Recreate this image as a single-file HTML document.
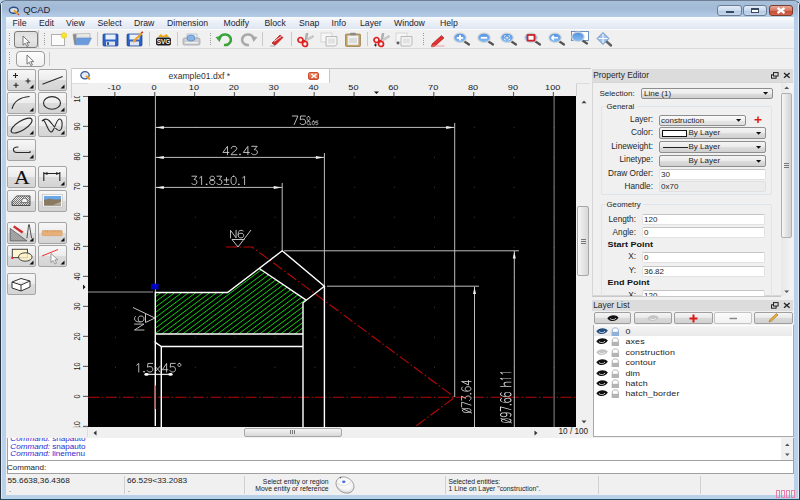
<!DOCTYPE html><html><head><meta charset="utf-8"><style>
*{margin:0;padding:0;box-sizing:border-box}
html,body{width:800px;height:500px;overflow:hidden;background:#b9d1ea;font-family:"Liberation Sans",sans-serif;color:#1e1e1e}
.a{position:absolute}
.t{position:absolute;white-space:nowrap;line-height:1}
svg{position:absolute;overflow:visible}
.btn{position:absolute;border:1px solid #9a9a9a;border-radius:3px;background:linear-gradient(#f6f6f6,#e9e9e9 45%,#d9d9d9 50%,#d2d2d2)}
.tbtn{position:absolute;border:1px solid #a5a5a5;border-radius:2px;background:linear-gradient(#f7f7f7,#ececec 50%,#dcdcdc 51%,#d4d4d4)}
.inp{position:absolute;background:#fff;border:1px solid #e2e2e2;border-top-color:#c4c4c4;border-radius:2px}
.cmb{position:absolute;border:1px solid #8e8e8e;border-radius:2px;background:linear-gradient(#f4f4f4,#ebebeb 50%,#dddddd 51%,#d0d0d0)}
</style></head><body>
<div class="a" style="left:0px;top:0px;width:800px;height:500px;background:linear-gradient(#a9bfd9,#a2bad6 8px,#b6cde8 16px,#bad1ea 40px,#bad1ea 100%);border:1px solid #2a3440;border-top-color:#6d7f94;border-bottom:1px solid #1d5060;border-radius:6px 6px 0 0"></div>
<div class="a" style="left:6px;top:17px;width:788px;height:478px;background:#f0f0f0"></div>
<div class="a" style="left:1px;top:3px;width:1px;height:495px;background:#dceaf8"></div>
<div class="a" style="left:798px;top:3px;width:1px;height:495px;background:#dceaf8"></div>
<svg style="left:8px;top:5px" width="14" height="12" viewBox="0 0 14 12">
<ellipse cx="5.8" cy="5.3" rx="4.4" ry="3.0" fill="#d8dde6" stroke="#2a4a8a" stroke-width="1.4"/>
<path d="M6 5.5 L10 9" stroke="#e8a020" stroke-width="1.8"/><path d="M10 9 L11 9.8" stroke="#d04040" stroke-width="1.5"/></svg>
<div class="t" style="left:23.3px;top:5.6px;font-size:9.4px;color:#1d2333;transform:scaleY(0.88);transform-origin:0 0">QCAD</div>
<div class="a" style="left:717px;top:5px;width:25px;height:11px;border:1px solid #6a7d95;border-radius:3px;background:linear-gradient(#e4edf8,#c9d9ee 50%,#b3c8e3 51%,#c5d7ee)"></div>
<div class="a" style="left:743px;top:5px;width:24px;height:11px;border:1px solid #6a7d95;border-radius:3px;background:linear-gradient(#e4edf8,#c9d9ee 50%,#b3c8e3 51%,#c5d7ee)"></div>
<div class="a" style="left:769px;top:5px;width:24px;height:11px;border:1px solid #7a3d30;border-radius:3px;background:linear-gradient(#e9a99a,#d67560 50%,#c24a32 51%,#d5664c)"></div>
<div class="a" style="left:726px;top:11px;width:8px;height:2px;background:#fff;border:1px solid #3a4a5e"></div>
<div class="a" style="left:751px;top:8px;width:8px;height:5px;border:1px solid #3a4a5e;border-top-width:2px;background:#fff"></div>
<svg style="left:776px;top:7px" width="10" height="7"><path d="M1.5 1 L8.5 6 M8.5 1 L1.5 6" stroke="#fff" stroke-width="2.2"/></svg>
<div class="a" style="left:6px;top:17px;width:788px;height:12px;background:linear-gradient(#fafbfd,#eaeff7 50%,#dfe7f2)"></div>
<div class="t" style="left:12.5px;top:19.0px;font-size:8.7px;color:#1c1c30;">File</div>
<div class="t" style="left:39px;top:19.0px;font-size:8.7px;color:#1c1c30;">Edit</div>
<div class="t" style="left:66px;top:19.0px;font-size:8.7px;color:#1c1c30;">View</div>
<div class="t" style="left:97.5px;top:19.0px;font-size:8.7px;color:#1c1c30;">Select</div>
<div class="t" style="left:134px;top:19.0px;font-size:8.7px;color:#1c1c30;">Draw</div>
<div class="t" style="left:167px;top:19.0px;font-size:8.7px;color:#1c1c30;">Dimension</div>
<div class="t" style="left:223.5px;top:19.0px;font-size:8.7px;color:#1c1c30;">Modify</div>
<div class="t" style="left:264.5px;top:19.0px;font-size:8.7px;color:#1c1c30;">Block</div>
<div class="t" style="left:299px;top:19.0px;font-size:8.7px;color:#1c1c30;">Snap</div>
<div class="t" style="left:331.5px;top:19.0px;font-size:8.7px;color:#1c1c30;">Info</div>
<div class="t" style="left:360px;top:19.0px;font-size:8.7px;color:#1c1c30;">Layer</div>
<div class="t" style="left:394px;top:19.0px;font-size:8.7px;color:#1c1c30;">Window</div>
<div class="t" style="left:440px;top:19.0px;font-size:8.7px;color:#1c1c30;">Help</div>
<div class="a" style="left:6px;top:29px;width:788px;height:20px;background:#f0f0f0;border-top:1px solid #fcfcfd;border-bottom:1px solid #dadada"></div>
<div class="a" style="left:9px;top:33px;width:1px;height:13px;background:repeating-linear-gradient(#9a9a9a 0 0.8px,transparent 0.8px 1.8px)"></div>
<div class="a" style="left:14px;top:31px;width:24px;height:17px;border:1px solid #7c7c7c;border-radius:3px;background:linear-gradient(#dedede,#e6e6e6 50%,#d8d8d8)"></div>
<div class="a" style="left:38px;top:29.5px;width:1px;height:19px;background:#c9c9c9"></div>
<svg style="left:21.5px;top:34.5px" width="10" height="13"><path d="M1 1 L1 10.2 L3.2 8.2 L4.9 11.6 L6.4 10.9 L4.8 7.6 L7.8 7.6 Z" fill="#fff" stroke="#6a6a6a" stroke-width="0.9" stroke-linejoin="round"/></svg>
<div class="a" style="left:44px;top:33px;width:1px;height:13px;background:repeating-linear-gradient(#9a9a9a 0 0.8px,transparent 0.8px 1.8px)"></div>
<svg style="left:50px;top:32px" width="18" height="15"><rect x="1.5" y="2.5" width="13" height="11" fill="#fbfbfb" stroke="#b0b0b0"/><circle cx="14" cy="3.5" r="2.8" fill="#f3e43a" stroke="#e6c200" stroke-width=".5"/></svg>
<svg style="left:72px;top:33px" width="21" height="13"><defs><linearGradient id="og" x1="0" y1="0" x2="0" y2="1"><stop offset="0" stop-color="#f4f4f4"/><stop offset="1" stop-color="#b8b8b8"/></linearGradient></defs><path d="M1 1 L18 0.5 L18 6 L3.5 11.5 L2.5 11.5Z" fill="url(#og)" stroke="#9a9a9a" stroke-width=".6"/><path d="M1 1.5 L4.5 1 L4 11 L2.5 11.5Z" fill="#8a8a8a"/><path d="M5 5 L19.5 5 L16.2 11.8 L3 11.8Z" fill="#6b9bda" stroke="#5a88c8" stroke-width=".5"/></svg>
<div class="a" style="left:97px;top:32px;width:1px;height:14px;background:#c9c9c9"></div>
<svg style="left:102px;top:33px" width="17" height="14"><rect x="1" y="1" width="15" height="12" rx="1" fill="#2d62c8" stroke="#1b3f90" stroke-width=".7"/><rect x="3.5" y="1.5" width="10" height="5" fill="#e8f0fb"/><rect x="4" y="8.5" width="9" height="4" fill="#dfe6f2"/><rect x="5" y="9.3" width="2" height="2.5" fill="#2d4f90"/></svg>
<svg style="left:126px;top:32px" width="18" height="15"><rect x="1" y="2" width="15" height="12" rx="1" fill="#2d62c8" stroke="#1b3f90" stroke-width=".7"/><rect x="3.5" y="2.5" width="10" height="5" fill="#e8f0fb"/><rect x="4" y="9.5" width="9" height="4" fill="#dfe6f2"/><path d="M7 10 L15.5 1.5" stroke="#f0a020" stroke-width="2.2"/><path d="M15 1 L17 0" stroke="#d04020" stroke-width="1.5"/></svg>
<div class="a" style="left:149px;top:32px;width:1px;height:14px;background:#c9c9c9"></div>
<svg style="left:155px;top:33px" width="17" height="13"><path d="M3 4 L5.5 1 L8.5 3 L11.5 1 L14 4Z" fill="#e8a818"/><rect x="1" y="4.5" width="15" height="8" rx="2" fill="#1a1a1a"/><text x="8.5" y="11" font-size="6.5" font-family="Liberation Sans" font-weight="bold" fill="#f0f0f0" text-anchor="middle">SVG</text></svg>
<div class="a" style="left:177px;top:32px;width:1px;height:14px;background:#c9c9c9"></div>
<svg style="left:182px;top:33px" width="19" height="13"><rect x="5" y="1" width="10" height="5" fill="#e8eef6" stroke="#9aa8b8" stroke-width=".6"/><rect x="1" y="5" width="17" height="7" rx="1.5" fill="#c9ccd1" stroke="#8d9299" stroke-width=".6"/><ellipse cx="9" cy="5" rx="4" ry="3" fill="#8ab4e4" stroke="#4a7ab4" stroke-width=".6"/><rect x="3" y="9" width="13" height="1.5" fill="#eee"/></svg>
<div class="a" style="left:210px;top:33px;width:1px;height:13px;background:repeating-linear-gradient(#9a9a9a 0 0.8px,transparent 0.8px 1.8px)"></div>
<svg style="left:215px;top:33px" width="18" height="14"><path d="M4 6 A6 5.3 0 1 1 9 12" fill="none" stroke="#3aa33a" stroke-width="2.6"/><path d="M0.5 4 L7 3 L4.5 9Z" fill="#3aa33a"/></svg>
<svg style="left:240px;top:33px" width="18" height="14"><path d="M14 6 A6 5.3 0 1 0 9 12" fill="none" stroke="#a9a9a9" stroke-width="2.6"/><path d="M17.5 4 L11 3 L13.5 9Z" fill="#a9a9a9"/></svg>
<div class="a" style="left:262px;top:32px;width:1px;height:14px;background:#c9c9c9"></div>
<svg style="left:269px;top:33px" width="16" height="14"><path d="M3 10 L11 2 L14 4.5 L6 12.5Z" fill="#d82828" stroke="#a01818" stroke-width=".6"/><path d="M5 8.5 L12.5 3.3" stroke="#fff" stroke-width=".9"/><path d="M1 13 L6 13" stroke="#b0b0b0" stroke-width="1"/></svg>
<div class="a" style="left:291px;top:32px;width:1px;height:14px;background:#c9c9c9"></div>
<svg style="left:296px;top:33px" width="18" height="14"><path d="M9 8 L10 0.5 L12 0.5 L10.5 7" fill="#b8b8b8" stroke="#8a8a8a" stroke-width=".5"/><path d="M9 7 L17 2.5 L17.5 4 L10.5 8" fill="#d8d8d8" stroke="#9a9a9a" stroke-width=".5"/><circle cx="4.5" cy="7" r="2.5" fill="none" stroke="#e02020" stroke-width="1.7"/><circle cx="9" cy="11" r="2.5" fill="none" stroke="#e02020" stroke-width="1.7"/><path d="M6.5 8 L9.5 7.5" stroke="#e02020" stroke-width="1.5"/></svg>
<svg style="left:320px;top:32px" width="19" height="15"><rect x="1" y="1" width="11" height="9" fill="#f6f6f6" stroke="#cfcfcf" stroke-width=".8"/><path d="M6 4.5 L17 4.5 L17 12.5 L15 14 L6 14Z" fill="#f4f4f4" stroke="#aaa" stroke-width=".8"/><rect x="8" y="6.5" width="7" height="5" fill="#e2e2e2"/></svg>
<svg style="left:344px;top:32px" width="18" height="15"><rect x="1.5" y="2" width="15" height="12.5" rx="1" fill="#c0a060" stroke="#9a7a40" stroke-width=".7"/><rect x="3.5" y="3.5" width="11" height="9.5" fill="#f0f0f0" stroke="#bbb" stroke-width=".4"/><rect x="6" y="0.8" width="6" height="2.5" rx="1" fill="#8a8a8a"/><rect x="5" y="6" width="8" height="5" fill="#dcdcdc"/></svg>
<div class="a" style="left:367px;top:32px;width:1px;height:14px;background:#c9c9c9"></div>
<svg style="left:372px;top:33px" width="18" height="14"><path d="M9 8 L10 0.5 L12 0.5 L10.5 7" fill="#b8b8b8" stroke="#8a8a8a" stroke-width=".5"/><path d="M9 7 L17 2.5 L17.5 4 L10.5 8" fill="#d8d8d8" stroke="#9a9a9a" stroke-width=".5"/><circle cx="4.5" cy="7" r="2.5" fill="none" stroke="#e02020" stroke-width="1.7"/><circle cx="9" cy="11" r="2.5" fill="none" stroke="#e02020" stroke-width="1.7"/><path d="M6.5 8 L9.5 7.5" stroke="#e02020" stroke-width="1.5"/><path d="M2 12 L5 12 M3.5 10.5 L3.5 13.5" stroke="#222" stroke-width=".9"/></svg>
<svg style="left:395px;top:32px" width="19" height="15"><rect x="1" y="1" width="11" height="9" fill="#f6f6f6" stroke="#cfcfcf" stroke-width=".8"/><path d="M6 4.5 L17 4.5 L17 12.5 L15 14 L6 14Z" fill="#f4f4f4" stroke="#aaa" stroke-width=".8"/><rect x="8" y="6.5" width="7" height="5" fill="#e2e2e2"/><path d="M1.5 11 L4.5 11 M3 9.5 L3 12.5" stroke="#222" stroke-width=".9"/></svg>
<div class="a" style="left:423px;top:33px;width:1px;height:13px;background:repeating-linear-gradient(#9a9a9a 0 0.8px,transparent 0.8px 1.8px)"></div>
<svg style="left:430px;top:33px" width="16" height="14"><path d="M2 11 L11.5 2.5 L14 5 L4.5 13.5 L1.5 13.8Z" fill="#e03030" stroke="#a02020" stroke-width=".6"/><path d="M2 13 L14.5 13" stroke="#e88" stroke-width=".8"/></svg>
<svg style="left:453px;top:32px" width="19" height="15"><defs><linearGradient id="lg453" x1="0" y1="0" x2="0" y2="1"><stop offset="0" stop-color="#4f8ee0"/><stop offset="1" stop-color="#8cc0f2"/></linearGradient></defs><path d="M11.5 9.5 L16 12.5" stroke="#555" stroke-width="2.2" stroke-linecap="round"/><ellipse cx="7" cy="5.8" rx="6.2" ry="4.7" fill="url(#lg453)" stroke="#d0d4d8" stroke-width="1.1"/><path d="M3.8 5.8 L10.2 5.8 M7 3 L7 8.6" stroke="#fff" stroke-width="1.8"/></svg>
<svg style="left:477px;top:32px" width="19" height="15"><defs><linearGradient id="lg477" x1="0" y1="0" x2="0" y2="1"><stop offset="0" stop-color="#4f8ee0"/><stop offset="1" stop-color="#8cc0f2"/></linearGradient></defs><path d="M11.5 9.5 L16 12.5" stroke="#555" stroke-width="2.2" stroke-linecap="round"/><ellipse cx="7" cy="5.8" rx="6.2" ry="4.7" fill="url(#lg477)" stroke="#d0d4d8" stroke-width="1.1"/><path d="M3.8 5.8 L10.2 5.8" stroke="#fff" stroke-width="1.8"/></svg>
<svg style="left:500px;top:32px" width="19" height="15"><defs><linearGradient id="lg500" x1="0" y1="0" x2="0" y2="1"><stop offset="0" stop-color="#4f8ee0"/><stop offset="1" stop-color="#8cc0f2"/></linearGradient></defs><path d="M11.5 9.5 L16 12.5" stroke="#555" stroke-width="2.2" stroke-linecap="round"/><ellipse cx="7" cy="5.8" rx="6.2" ry="4.7" fill="url(#lg500)" stroke="#d0d4d8" stroke-width="1.1"/><path d="M4 4.5 L5.5 3.5 M10 4.5 L8.5 3.5 M4 7 L5.5 8 M10 7 L8.5 8" stroke="#fff" stroke-width="1"/><ellipse cx="7" cy="5.8" rx="1.5" ry="1" fill="#dde"/></svg>
<svg style="left:524px;top:32px" width="19" height="15"><defs><linearGradient id="lg524" x1="0" y1="0" x2="0" y2="1"><stop offset="0" stop-color="#4f8ee0"/><stop offset="1" stop-color="#8cc0f2"/></linearGradient></defs><path d="M11.5 9.5 L16 12.5" stroke="#555" stroke-width="2.2" stroke-linecap="round"/><ellipse cx="7" cy="5.8" rx="6.2" ry="4.7" fill="url(#lg524)" stroke="#d0d4d8" stroke-width="1.1"/><rect x="3.6" y="3" width="6.8" height="5.6" fill="#fff" stroke="#d02020" stroke-width="1.7"/></svg>
<svg style="left:548px;top:32px" width="19" height="15"><defs><linearGradient id="lg548" x1="0" y1="0" x2="0" y2="1"><stop offset="0" stop-color="#4f8ee0"/><stop offset="1" stop-color="#8cc0f2"/></linearGradient></defs><path d="M11.5 9.5 L16 12.5" stroke="#555" stroke-width="2.2" stroke-linecap="round"/><ellipse cx="7" cy="5.8" rx="6.2" ry="4.7" fill="url(#lg548)" stroke="#d0d4d8" stroke-width="1.1"/><path d="M3.5 5.8 L10 5.8 M3.5 5.8 L5.8 3.6 M3.5 5.8 L5.8 8" stroke="#fff" stroke-width="1.5"/></svg>
<svg style="left:571px;top:31px" width="19" height="15"><rect x="0.5" y="0.5" width="17" height="9" fill="#fff" stroke="#4a78b8" stroke-width=".8"/><defs><linearGradient id="lg571" x1="0" y1="0" x2="0" y2="1"><stop offset="0" stop-color="#4f8ee0"/><stop offset="1" stop-color="#8cc0f2"/></linearGradient></defs><path d="M11.5 9.5 L16 12.5" stroke="#555" stroke-width="2.2" stroke-linecap="round"/><ellipse cx="7" cy="5.8" rx="6.2" ry="4.7" fill="url(#lg571)" stroke="#d0d4d8" stroke-width="1.1"/></svg>
<svg style="left:596px;top:32px" width="19" height="15"><path d="M10 9 L15 13.5" stroke="#606060" stroke-width="2.4" stroke-linecap="round"/><path d="M7 0.5 L13 6.5 L7 12.5 L1 6.5Z" fill="#9cc0ea" stroke="#5d85b6" stroke-width=".8"/><path d="M7 2 L7 11 M2.5 6.5 L11.5 6.5" stroke="#fff" stroke-width="1"/></svg>
<div class="a" style="left:6px;top:49px;width:788px;height:18px;background:#f0f0f0"></div>
<div class="a" style="left:9px;top:52px;width:1px;height:13px;background:repeating-linear-gradient(#9a9a9a 0 0.8px,transparent 0.8px 1.8px)"></div>
<div class="a" style="left:16px;top:51px;width:29px;height:16px;border:1px solid #9c9c9c;border-radius:4px;background:linear-gradient(#fdfdfd,#f0f0f0)"></div>
<svg style="left:25.5px;top:53.5px" width="10" height="13"><path d="M1 1 L1 10.2 L3.2 8.2 L4.9 11.6 L6.4 10.9 L4.8 7.6 L7.8 7.6 Z" fill="#fff" stroke="#6a6a6a" stroke-width="0.9" stroke-linejoin="round"/></svg>
<div class="a" style="left:48.5px;top:52px;width:1px;height:14px;background:#c9c9c9"></div>
<div class="a" style="left:6px;top:67px;width:66px;height:370px;background:#f0f0f0"></div>
<div class="tbtn" style="left:7px;top:68.5px;width:29px;height:22px"></div>
<svg style="left:7px;top:68.5px" width="29" height="22"><path d="M8.5 4 L8.5 9 M6 6.5 L11 6.5 M21 9.5 L21 14.5 M18.5 12 L23.5 12 M9 13.8 L9 18.8 M6.5 16.3 L11.5 16.3" stroke="#222" stroke-width="1.1" fill="none"/><path d="M22.5 19.5 L26.5 19.5 L26.5 15.5Z" fill="#111"/></svg>
<div class="tbtn" style="left:38px;top:68.5px;width:29px;height:22px"></div>
<svg style="left:38px;top:68.5px" width="29" height="22"><path d="M4.4 15.2 L24.7 7.5" stroke="#2a2a2a" fill="none" stroke-width="1.1"/><path d="M22.5 19.5 L26.5 19.5 L26.5 15.5Z" fill="#111"/></svg>
<div class="tbtn" style="left:7px;top:92px;width:29px;height:22px"></div>
<svg style="left:7px;top:92px" width="29" height="22"><path d="M5 16.8 Q8 5.5 22.6 4.5" stroke="#2a2a2a" fill="none" stroke-width="1.1"/><path d="M22.5 19.5 L26.5 19.5 L26.5 15.5Z" fill="#111"/></svg>
<div class="tbtn" style="left:38px;top:92px;width:29px;height:22px"></div>
<svg style="left:38px;top:92px" width="29" height="22"><ellipse cx="14" cy="10.9" rx="8.5" ry="6.3" stroke="#2a2a2a" fill="none" stroke-width="1.1"/><path d="M22.5 19.5 L26.5 19.5 L26.5 15.5Z" fill="#111"/></svg>
<div class="tbtn" style="left:7px;top:115px;width:29px;height:22px"></div>
<svg style="left:7px;top:115px" width="29" height="22"><ellipse cx="14.6" cy="10.6" rx="12" ry="4.6" transform="rotate(-32 14.6 10.6)" stroke="#2a2a2a" fill="none" stroke-width="1.1"/><path d="M22.5 19.5 L26.5 19.5 L26.5 15.5Z" fill="#111"/></svg>
<div class="tbtn" style="left:38px;top:115px;width:29px;height:22px"></div>
<svg style="left:38px;top:115px" width="29" height="22"><path d="M4 6 C7 2 9 15 12.5 16.8 C16 18.5 18 4 21.5 4 C25.5 4 24.5 15 21.5 15.5 C18 16 14 8 11 5.5 C8 3 5.5 4.5 4 6Z" stroke="#2a2a2a" fill="none" stroke-width="1.1"/><path d="M22.5 19.5 L26.5 19.5 L26.5 15.5Z" fill="#111"/></svg>
<div class="tbtn" style="left:7px;top:138.5px;width:29px;height:22px"></div>
<svg style="left:7px;top:138.5px" width="29" height="22"><path d="M11.3 8.1 C7.5 7.8 6.2 9.5 6.4 10.8 C6.6 12.5 8 13.5 9.7 13.5 L23 13.5 L23 12" stroke="#2a2a2a" fill="none" stroke-width="1.1"/><path d="M22.5 19.5 L26.5 19.5 L26.5 15.5Z" fill="#111"/></svg>
<div class="tbtn" style="left:7px;top:166px;width:29px;height:22px"></div>
<svg style="left:7px;top:166px" width="29" height="22"><text x="14.8" y="17.8" font-family="Liberation Serif" font-size="19" text-anchor="middle" fill="#111" transform="translate(14.8 0) scale(1.15 1) translate(-14.8 0)">A</text></svg>
<div class="tbtn" style="left:38px;top:166px;width:29px;height:22px"></div>
<svg style="left:38px;top:166px" width="29" height="22"><path d="M5.8 6 L5.8 15 M21.8 6 L21.8 15 M5.8 7.5 L21.8 7.5" stroke="#222" stroke-width="1.1" fill="none"/><path d="M5.8 7.5 L9.5 6 L9.5 9Z M21.8 7.5 L18.1 6 L18.1 9Z" fill="#222"/><path d="M22.5 19.5 L26.5 19.5 L26.5 15.5Z" fill="#111"/></svg>
<div class="tbtn" style="left:7px;top:189.5px;width:29px;height:22px"></div>
<svg style="left:7px;top:189.5px" width="29" height="22"><defs><pattern id="hp" width="2" height="2" patternUnits="userSpaceOnUse"><path d="M0 2 L2 0" stroke="#444" stroke-width=".7"/></pattern></defs><path d="M5 15.5 L5 11.2 L9.7 5.9 L23 5.9 L23 15.5Z" fill="url(#hp)" stroke="#333" stroke-width=".8"/><path d="M14.5 12.5 C14.5 9.5 15.5 8.3 17.5 8.3 C19.5 8.3 20.5 9.5 20.5 12.5Z" fill="#f4f4f4" stroke="#444" stroke-width=".6"/></svg>
<div class="tbtn" style="left:38px;top:189.5px;width:29px;height:22px"></div>
<svg style="left:38px;top:189.5px" width="29" height="22"><rect x="4.5" y="4.5" width="20" height="12.5" fill="#f8f8f8" stroke="#bbb" stroke-width=".6"/><rect x="6" y="6" width="17" height="9.5" fill="#7a7a70"/><rect x="6" y="6" width="17" height="3.5" fill="#6aa8e8"/><path d="M6 11 L11 8.5 L17 10 L23 9.5 L23 15.5 L6 15.5Z" fill="#8a7a62"/><path d="M14 15.5 L23 11.5 L23 15.5Z" fill="#b0a898"/></svg>
<div class="tbtn" style="left:7px;top:221.5px;width:29px;height:22px"></div>
<svg style="left:7px;top:221.5px" width="29" height="22"><defs><pattern id="hp2" width="1.6" height="1.6" patternUnits="userSpaceOnUse"><path d="M0 1.6 L1.6 0" stroke="#666" stroke-width=".5"/></pattern></defs><path d="M3.2 6.4 L3.2 18.9 L19.9 18.9Z" fill="#bdbdbd" stroke="#555" stroke-width=".8"/><path d="M3.2 6.4 L3.2 18.9 L19.9 18.9Z" fill="url(#hp2)"/><path d="M7.4 3.8 L16.2 9.8 L15 11.2 L6.4 5.3Z" fill="#e02828" stroke="#a01818" stroke-width=".5"/><path d="M16.2 9.8 L17.3 10.6 L15 11.2Z" fill="#e8c090"/><path d="M21.6 3.3 L19.9 16.3 M22.4 3.3 L24.6 16.3" stroke="#444" stroke-width=".9" fill="none"/><rect x="21" y="2.5" width="2" height="2" fill="#555"/><path d="M22.5 19.5 L26.5 19.5 L26.5 15.5Z" fill="#111"/></svg>
<div class="tbtn" style="left:38px;top:221.5px;width:29px;height:22px"></div>
<svg style="left:38px;top:221.5px" width="29" height="22"><rect x="4" y="8.5" width="20.3" height="5.2" rx="1" fill="#e8b078" stroke="#d09860" stroke-width=".5"/><path d="M7 8.5 L7 10 M9.5 8.5 L9.5 10.5 M12 8.5 L12 10 M14.5 8.5 L14.5 10.5 M17 8.5 L17 10 M19.5 8.5 L19.5 10.5 M22 8.5 L22 10" stroke="#b88050" stroke-width=".5"/><path d="M22.5 19.5 L26.5 19.5 L26.5 15.5Z" fill="#111"/></svg>
<div class="tbtn" style="left:7px;top:245px;width:29px;height:22px"></div>
<svg style="left:7px;top:245px" width="29" height="22"><rect x="5.3" y="4.25" width="15.1" height="8.4" fill="#fff5d0" stroke="#333" stroke-width=".9"/><ellipse cx="18.3" cy="12" rx="6.8" ry="4.2" fill="#fff2c8" fill-opacity=".8" stroke="#333" stroke-width=".9"/><circle cx="5.3" cy="13" r="1" fill="#e02020"/><path d="M5.3 12.6 L5.3 14" stroke="#e02020" stroke-width="1"/><path d="M22.5 19.5 L26.5 19.5 L26.5 15.5Z" fill="#111"/></svg>
<div class="tbtn" style="left:38px;top:245px;width:29px;height:22px"></div>
<svg style="left:38px;top:245px" width="29" height="22"><path d="M4 11 L20 4.5" stroke="#f03030" stroke-width="1"/><path d="M13 8.5 L13 17.5 L15.2 15.5 L17 19 L18.5 18.2 L16.8 14.8 L19.8 14.8Z" fill="#fff" stroke="#777" stroke-width=".7"/><path d="M22.5 19.5 L26.5 19.5 L26.5 15.5Z" fill="#111"/></svg>
<div class="tbtn" style="left:7px;top:272.5px;width:29px;height:22px"></div>
<svg style="left:7px;top:272.5px" width="29" height="22"><path d="M5 9 L14 5.5 L23 8 L23 14 L14 18 L5 15Z M5 9 L14 12 L23 8 M14 12 L14 18" fill="#fff" stroke="#333" stroke-width="1"/></svg>
<div class="a" style="left:72px;top:67px;width:520px;height:370px;background:#f0f0f0"></div>
<div class="a" style="left:72px;top:68px;width:519px;height:1px;background:#c5c5c5"></div>
<div class="a" style="left:71px;top:68px;width:1px;height:30px;background:#d0d0d0"></div>
<div class="a" style="left:72px;top:69px;width:258px;height:14px;background:#fff;border-right:1px solid #c8c8c8"></div>
<svg style="left:80px;top:71px" width="12" height="10"><ellipse cx="5" cy="4.3" rx="4.2" ry="3.6" fill="#e6ecf8" stroke="#3a5a9a" stroke-width="1.3"/><path d="M6 5 L10 8.5" stroke="#e8a020" stroke-width="1.8"/></svg>
<div class="t" style="left:168.6px;top:72.3px;font-size:8.6px;color:#333;">example01.dxf *</div>
<div class="a" style="left:308px;top:72px;width:11px;height:8px;border-radius:2px;background:linear-gradient(#f09070,#d85a3a);border:1px solid #c85030"></div>
<svg style="left:310px;top:73px" width="8" height="6"><path d="M1.5 1 L6.5 5 M6.5 1 L1.5 5" stroke="#fff" stroke-width="1.5"/></svg>
<div class="a" style="left:72px;top:83px;width:16px;height:13px;background:#f0f0f0;border-top:1px solid #e0e0e0"></div>
<div class="a" style="left:576px;top:83px;width:14px;height:13px;background:#f0f0f0;border-left:1px solid #d0d0d0"></div>
<div class="a" style="left:72px;top:82.5px;width:518px;height:1px;background:#dcdcdc"></div>
<div class="a" style="left:88px;top:83px;width:488px;height:13px;background:#f0f0f0"></div>
<div class="a" style="left:72px;top:96px;width:16px;height:331px;background:#f0f0f0"></div>
<svg style="left:0;top:0" width="800" height="500"><line x1="114.83" y1="92" x2="114.83" y2="96" stroke="#666" stroke-width="1.2"/><text x="0" y="0" transform="translate(114.23 89.8) scale(1 0.8)" font-size="9.2" font-family="Liberation Sans" fill="#1a1a1a" text-anchor="middle">-10</text><line x1="154.70000000000002" y1="92" x2="154.70000000000002" y2="96" stroke="#666" stroke-width="1.2"/><text x="0" y="0" transform="translate(154.10000000000002 89.8) scale(1 0.8)" font-size="9.2" font-family="Liberation Sans" fill="#1a1a1a" text-anchor="middle">0</text><line x1="194.57000000000002" y1="92" x2="194.57000000000002" y2="96" stroke="#666" stroke-width="1.2"/><text x="0" y="0" transform="translate(193.97000000000003 89.8) scale(1 0.8)" font-size="9.2" font-family="Liberation Sans" fill="#1a1a1a" text-anchor="middle">10</text><line x1="234.44000000000003" y1="92" x2="234.44000000000003" y2="96" stroke="#666" stroke-width="1.2"/><text x="0" y="0" transform="translate(233.84000000000003 89.8) scale(1 0.8)" font-size="9.2" font-family="Liberation Sans" fill="#1a1a1a" text-anchor="middle">20</text><line x1="274.31" y1="92" x2="274.31" y2="96" stroke="#666" stroke-width="1.2"/><text x="0" y="0" transform="translate(273.71 89.8) scale(1 0.8)" font-size="9.2" font-family="Liberation Sans" fill="#1a1a1a" text-anchor="middle">30</text><line x1="314.18" y1="92" x2="314.18" y2="96" stroke="#666" stroke-width="1.2"/><text x="0" y="0" transform="translate(313.58 89.8) scale(1 0.8)" font-size="9.2" font-family="Liberation Sans" fill="#1a1a1a" text-anchor="middle">40</text><line x1="354.05" y1="92" x2="354.05" y2="96" stroke="#666" stroke-width="1.2"/><text x="0" y="0" transform="translate(353.45 89.8) scale(1 0.8)" font-size="9.2" font-family="Liberation Sans" fill="#1a1a1a" text-anchor="middle">50</text><line x1="393.92" y1="92" x2="393.92" y2="96" stroke="#666" stroke-width="1.2"/><text x="0" y="0" transform="translate(393.32 89.8) scale(1 0.8)" font-size="9.2" font-family="Liberation Sans" fill="#1a1a1a" text-anchor="middle">60</text><line x1="433.79" y1="92" x2="433.79" y2="96" stroke="#666" stroke-width="1.2"/><text x="0" y="0" transform="translate(433.19 89.8) scale(1 0.8)" font-size="9.2" font-family="Liberation Sans" fill="#1a1a1a" text-anchor="middle">70</text><line x1="473.66" y1="92" x2="473.66" y2="96" stroke="#666" stroke-width="1.2"/><text x="0" y="0" transform="translate(473.06 89.8) scale(1 0.8)" font-size="9.2" font-family="Liberation Sans" fill="#1a1a1a" text-anchor="middle">80</text><line x1="513.53" y1="92" x2="513.53" y2="96" stroke="#666" stroke-width="1.2"/><text x="0" y="0" transform="translate(512.93 89.8) scale(1 0.8)" font-size="9.2" font-family="Liberation Sans" fill="#1a1a1a" text-anchor="middle">90</text><line x1="553.4" y1="92" x2="553.4" y2="96" stroke="#666" stroke-width="1.2"/><text x="0" y="0" transform="translate(552.8 89.8) scale(1 0.8)" font-size="9.2" font-family="Liberation Sans" fill="#1a1a1a" text-anchor="middle">100</text><path d="M374 91.5 L379 91.5 L376.5 94Z" fill="#111"/></svg>
<div class="a" style="left:72px;top:96px;width:16px;height:331px;overflow:hidden"><svg style="left:0;top:0" width="16" height="331" viewBox="72 96 16 331"><line x1="83" y1="426.40000000000003" x2="88" y2="426.40000000000003" stroke="#666" stroke-width="1.2"/><text x="0" y="0" transform="translate(79.8 426.40000000000003) rotate(-90) scale(0.78 1)" font-size="9.4" font-family="Liberation Sans" fill="#1a1a1a" text-anchor="middle">-10</text><line x1="83" y1="396.40000000000003" x2="88" y2="396.40000000000003" stroke="#666" stroke-width="1.2"/><text x="0" y="0" transform="translate(79.8 396.40000000000003) rotate(-90) scale(0.78 1)" font-size="9.4" font-family="Liberation Sans" fill="#1a1a1a" text-anchor="middle">0</text><line x1="83" y1="366.40000000000003" x2="88" y2="366.40000000000003" stroke="#666" stroke-width="1.2"/><text x="0" y="0" transform="translate(79.8 366.40000000000003) rotate(-90) scale(0.78 1)" font-size="9.4" font-family="Liberation Sans" fill="#1a1a1a" text-anchor="middle">10</text><line x1="83" y1="336.40000000000003" x2="88" y2="336.40000000000003" stroke="#666" stroke-width="1.2"/><text x="0" y="0" transform="translate(79.8 336.40000000000003) rotate(-90) scale(0.78 1)" font-size="9.4" font-family="Liberation Sans" fill="#1a1a1a" text-anchor="middle">20</text><line x1="83" y1="306.40000000000003" x2="88" y2="306.40000000000003" stroke="#666" stroke-width="1.2"/><text x="0" y="0" transform="translate(79.8 306.40000000000003) rotate(-90) scale(0.78 1)" font-size="9.4" font-family="Liberation Sans" fill="#1a1a1a" text-anchor="middle">30</text><line x1="83" y1="276.40000000000003" x2="88" y2="276.40000000000003" stroke="#666" stroke-width="1.2"/><text x="0" y="0" transform="translate(79.8 276.40000000000003) rotate(-90) scale(0.78 1)" font-size="9.4" font-family="Liberation Sans" fill="#1a1a1a" text-anchor="middle">40</text><line x1="83" y1="246.4" x2="88" y2="246.4" stroke="#666" stroke-width="1.2"/><text x="0" y="0" transform="translate(79.8 246.4) rotate(-90) scale(0.78 1)" font-size="9.4" font-family="Liberation Sans" fill="#1a1a1a" text-anchor="middle">50</text><line x1="83" y1="216.4" x2="88" y2="216.4" stroke="#666" stroke-width="1.2"/><text x="0" y="0" transform="translate(79.8 216.4) rotate(-90) scale(0.78 1)" font-size="9.4" font-family="Liberation Sans" fill="#1a1a1a" text-anchor="middle">60</text><line x1="83" y1="186.4" x2="88" y2="186.4" stroke="#666" stroke-width="1.2"/><text x="0" y="0" transform="translate(79.8 186.4) rotate(-90) scale(0.78 1)" font-size="9.4" font-family="Liberation Sans" fill="#1a1a1a" text-anchor="middle">70</text><line x1="83" y1="156.4" x2="88" y2="156.4" stroke="#666" stroke-width="1.2"/><text x="0" y="0" transform="translate(79.8 156.4) rotate(-90) scale(0.78 1)" font-size="9.4" font-family="Liberation Sans" fill="#1a1a1a" text-anchor="middle">80</text><line x1="83" y1="126.4" x2="88" y2="126.4" stroke="#666" stroke-width="1.2"/><text x="0" y="0" transform="translate(79.8 126.4) rotate(-90) scale(0.78 1)" font-size="9.4" font-family="Liberation Sans" fill="#1a1a1a" text-anchor="middle">90</text><line x1="83" y1="96.4" x2="88" y2="96.4" stroke="#666" stroke-width="1.2"/><text x="0" y="0" transform="translate(79.8 96.4) rotate(-90) scale(0.78 1)" font-size="9.4" font-family="Liberation Sans" fill="#1a1a1a" text-anchor="middle">100</text><path d="M83 284.5 L83 289.5 L85.5 287Z" fill="#111"/></svg></div>
<svg style="left:88px;top:96px;overflow:hidden" width="488" height="331" viewBox="88 96 488 331"><rect x="88" y="96" width="488" height="331" fill="#000"/><rect x="115.0" y="396.8" width="1" height="1" fill="#3c3c3c"/><rect x="115.0" y="366.8" width="1" height="1" fill="#3c3c3c"/><rect x="115.0" y="336.8" width="1" height="1" fill="#3c3c3c"/><rect x="115.0" y="306.8" width="1" height="1" fill="#3c3c3c"/><rect x="115.0" y="276.8" width="1" height="1" fill="#3c3c3c"/><rect x="115.0" y="246.8" width="1" height="1" fill="#3c3c3c"/><rect x="115.0" y="216.8" width="1" height="1" fill="#3c3c3c"/><rect x="115.0" y="186.8" width="1" height="1" fill="#3c3c3c"/><rect x="115.0" y="156.8" width="1" height="1" fill="#3c3c3c"/><rect x="115.0" y="126.8" width="1" height="1" fill="#3c3c3c"/><rect x="115.0" y="96.8" width="1" height="1" fill="#3c3c3c"/><rect x="154.9" y="396.8" width="1" height="1" fill="#3c3c3c"/><rect x="154.9" y="366.8" width="1" height="1" fill="#3c3c3c"/><rect x="154.9" y="336.8" width="1" height="1" fill="#3c3c3c"/><rect x="154.9" y="306.8" width="1" height="1" fill="#3c3c3c"/><rect x="154.9" y="276.8" width="1" height="1" fill="#3c3c3c"/><rect x="154.9" y="246.8" width="1" height="1" fill="#3c3c3c"/><rect x="154.9" y="216.8" width="1" height="1" fill="#3c3c3c"/><rect x="154.9" y="186.8" width="1" height="1" fill="#3c3c3c"/><rect x="154.9" y="156.8" width="1" height="1" fill="#3c3c3c"/><rect x="154.9" y="126.8" width="1" height="1" fill="#3c3c3c"/><rect x="154.9" y="96.8" width="1" height="1" fill="#3c3c3c"/><rect x="194.8" y="396.8" width="1" height="1" fill="#3c3c3c"/><rect x="194.8" y="366.8" width="1" height="1" fill="#3c3c3c"/><rect x="194.8" y="336.8" width="1" height="1" fill="#3c3c3c"/><rect x="194.8" y="306.8" width="1" height="1" fill="#3c3c3c"/><rect x="194.8" y="276.8" width="1" height="1" fill="#3c3c3c"/><rect x="194.8" y="246.8" width="1" height="1" fill="#3c3c3c"/><rect x="194.8" y="216.8" width="1" height="1" fill="#3c3c3c"/><rect x="194.8" y="186.8" width="1" height="1" fill="#3c3c3c"/><rect x="194.8" y="156.8" width="1" height="1" fill="#3c3c3c"/><rect x="194.8" y="126.8" width="1" height="1" fill="#3c3c3c"/><rect x="194.8" y="96.8" width="1" height="1" fill="#3c3c3c"/><rect x="234.6" y="396.8" width="1" height="1" fill="#3c3c3c"/><rect x="234.6" y="366.8" width="1" height="1" fill="#3c3c3c"/><rect x="234.6" y="336.8" width="1" height="1" fill="#3c3c3c"/><rect x="234.6" y="306.8" width="1" height="1" fill="#3c3c3c"/><rect x="234.6" y="276.8" width="1" height="1" fill="#3c3c3c"/><rect x="234.6" y="246.8" width="1" height="1" fill="#3c3c3c"/><rect x="234.6" y="216.8" width="1" height="1" fill="#3c3c3c"/><rect x="234.6" y="186.8" width="1" height="1" fill="#3c3c3c"/><rect x="234.6" y="156.8" width="1" height="1" fill="#3c3c3c"/><rect x="234.6" y="126.8" width="1" height="1" fill="#3c3c3c"/><rect x="234.6" y="96.8" width="1" height="1" fill="#3c3c3c"/><rect x="274.5" y="396.8" width="1" height="1" fill="#3c3c3c"/><rect x="274.5" y="366.8" width="1" height="1" fill="#3c3c3c"/><rect x="274.5" y="336.8" width="1" height="1" fill="#3c3c3c"/><rect x="274.5" y="306.8" width="1" height="1" fill="#3c3c3c"/><rect x="274.5" y="276.8" width="1" height="1" fill="#3c3c3c"/><rect x="274.5" y="246.8" width="1" height="1" fill="#3c3c3c"/><rect x="274.5" y="216.8" width="1" height="1" fill="#3c3c3c"/><rect x="274.5" y="186.8" width="1" height="1" fill="#3c3c3c"/><rect x="274.5" y="156.8" width="1" height="1" fill="#3c3c3c"/><rect x="274.5" y="126.8" width="1" height="1" fill="#3c3c3c"/><rect x="274.5" y="96.8" width="1" height="1" fill="#3c3c3c"/><rect x="314.4" y="396.8" width="1" height="1" fill="#3c3c3c"/><rect x="314.4" y="366.8" width="1" height="1" fill="#3c3c3c"/><rect x="314.4" y="336.8" width="1" height="1" fill="#3c3c3c"/><rect x="314.4" y="306.8" width="1" height="1" fill="#3c3c3c"/><rect x="314.4" y="276.8" width="1" height="1" fill="#3c3c3c"/><rect x="314.4" y="246.8" width="1" height="1" fill="#3c3c3c"/><rect x="314.4" y="216.8" width="1" height="1" fill="#3c3c3c"/><rect x="314.4" y="186.8" width="1" height="1" fill="#3c3c3c"/><rect x="314.4" y="156.8" width="1" height="1" fill="#3c3c3c"/><rect x="314.4" y="126.8" width="1" height="1" fill="#3c3c3c"/><rect x="314.4" y="96.8" width="1" height="1" fill="#3c3c3c"/><rect x="354.2" y="396.8" width="1" height="1" fill="#3c3c3c"/><rect x="354.2" y="366.8" width="1" height="1" fill="#3c3c3c"/><rect x="354.2" y="336.8" width="1" height="1" fill="#3c3c3c"/><rect x="354.2" y="306.8" width="1" height="1" fill="#3c3c3c"/><rect x="354.2" y="276.8" width="1" height="1" fill="#3c3c3c"/><rect x="354.2" y="246.8" width="1" height="1" fill="#3c3c3c"/><rect x="354.2" y="216.8" width="1" height="1" fill="#3c3c3c"/><rect x="354.2" y="186.8" width="1" height="1" fill="#3c3c3c"/><rect x="354.2" y="156.8" width="1" height="1" fill="#3c3c3c"/><rect x="354.2" y="126.8" width="1" height="1" fill="#3c3c3c"/><rect x="354.2" y="96.8" width="1" height="1" fill="#3c3c3c"/><rect x="394.1" y="396.8" width="1" height="1" fill="#3c3c3c"/><rect x="394.1" y="366.8" width="1" height="1" fill="#3c3c3c"/><rect x="394.1" y="336.8" width="1" height="1" fill="#3c3c3c"/><rect x="394.1" y="306.8" width="1" height="1" fill="#3c3c3c"/><rect x="394.1" y="276.8" width="1" height="1" fill="#3c3c3c"/><rect x="394.1" y="246.8" width="1" height="1" fill="#3c3c3c"/><rect x="394.1" y="216.8" width="1" height="1" fill="#3c3c3c"/><rect x="394.1" y="186.8" width="1" height="1" fill="#3c3c3c"/><rect x="394.1" y="156.8" width="1" height="1" fill="#3c3c3c"/><rect x="394.1" y="126.8" width="1" height="1" fill="#3c3c3c"/><rect x="394.1" y="96.8" width="1" height="1" fill="#3c3c3c"/><rect x="434.0" y="396.8" width="1" height="1" fill="#3c3c3c"/><rect x="434.0" y="366.8" width="1" height="1" fill="#3c3c3c"/><rect x="434.0" y="336.8" width="1" height="1" fill="#3c3c3c"/><rect x="434.0" y="306.8" width="1" height="1" fill="#3c3c3c"/><rect x="434.0" y="276.8" width="1" height="1" fill="#3c3c3c"/><rect x="434.0" y="246.8" width="1" height="1" fill="#3c3c3c"/><rect x="434.0" y="216.8" width="1" height="1" fill="#3c3c3c"/><rect x="434.0" y="186.8" width="1" height="1" fill="#3c3c3c"/><rect x="434.0" y="156.8" width="1" height="1" fill="#3c3c3c"/><rect x="434.0" y="126.8" width="1" height="1" fill="#3c3c3c"/><rect x="434.0" y="96.8" width="1" height="1" fill="#3c3c3c"/><rect x="473.9" y="396.8" width="1" height="1" fill="#3c3c3c"/><rect x="473.9" y="366.8" width="1" height="1" fill="#3c3c3c"/><rect x="473.9" y="336.8" width="1" height="1" fill="#3c3c3c"/><rect x="473.9" y="306.8" width="1" height="1" fill="#3c3c3c"/><rect x="473.9" y="276.8" width="1" height="1" fill="#3c3c3c"/><rect x="473.9" y="246.8" width="1" height="1" fill="#3c3c3c"/><rect x="473.9" y="216.8" width="1" height="1" fill="#3c3c3c"/><rect x="473.9" y="186.8" width="1" height="1" fill="#3c3c3c"/><rect x="473.9" y="156.8" width="1" height="1" fill="#3c3c3c"/><rect x="473.9" y="126.8" width="1" height="1" fill="#3c3c3c"/><rect x="473.9" y="96.8" width="1" height="1" fill="#3c3c3c"/><rect x="513.7" y="396.8" width="1" height="1" fill="#3c3c3c"/><rect x="513.7" y="366.8" width="1" height="1" fill="#3c3c3c"/><rect x="513.7" y="336.8" width="1" height="1" fill="#3c3c3c"/><rect x="513.7" y="306.8" width="1" height="1" fill="#3c3c3c"/><rect x="513.7" y="276.8" width="1" height="1" fill="#3c3c3c"/><rect x="513.7" y="246.8" width="1" height="1" fill="#3c3c3c"/><rect x="513.7" y="216.8" width="1" height="1" fill="#3c3c3c"/><rect x="513.7" y="186.8" width="1" height="1" fill="#3c3c3c"/><rect x="513.7" y="156.8" width="1" height="1" fill="#3c3c3c"/><rect x="513.7" y="126.8" width="1" height="1" fill="#3c3c3c"/><rect x="513.7" y="96.8" width="1" height="1" fill="#3c3c3c"/><rect x="553.6" y="396.8" width="1" height="1" fill="#3c3c3c"/><rect x="553.6" y="366.8" width="1" height="1" fill="#3c3c3c"/><rect x="553.6" y="336.8" width="1" height="1" fill="#3c3c3c"/><rect x="553.6" y="306.8" width="1" height="1" fill="#3c3c3c"/><rect x="553.6" y="276.8" width="1" height="1" fill="#3c3c3c"/><rect x="553.6" y="246.8" width="1" height="1" fill="#3c3c3c"/><rect x="553.6" y="216.8" width="1" height="1" fill="#3c3c3c"/><rect x="553.6" y="186.8" width="1" height="1" fill="#3c3c3c"/><rect x="553.6" y="156.8" width="1" height="1" fill="#3c3c3c"/><rect x="553.6" y="126.8" width="1" height="1" fill="#3c3c3c"/><rect x="553.6" y="96.8" width="1" height="1" fill="#3c3c3c"/><line x1="155.4" y1="96" x2="155.4" y2="292" stroke="#bdbdbd" stroke-width="1"/><line x1="554.1" y1="96" x2="554.1" y2="427" stroke="#8a8a8a" stroke-width="1"/><defs><clipPath id="hc"><polygon points="155.3,292.5 227.5,292.5 259.3,268.5 306.2,300.2 303,302.8 303,334 155.3,334"/></clipPath></defs><g clip-path="url(#hc)" stroke="#10d010" stroke-width="1"><line x1="-39.3" y1="337.7" x2="80.7" y2="247.7"/><line x1="-32.3" y1="337.7" x2="87.7" y2="247.7"/><line x1="-25.3" y1="337.7" x2="94.7" y2="247.7"/><line x1="-18.3" y1="337.7" x2="101.7" y2="247.7"/><line x1="-11.3" y1="337.7" x2="108.7" y2="247.7"/><line x1="-4.3" y1="337.7" x2="115.7" y2="247.7"/><line x1="2.7" y1="337.7" x2="122.7" y2="247.7"/><line x1="9.7" y1="337.7" x2="129.7" y2="247.7"/><line x1="16.7" y1="337.7" x2="136.7" y2="247.7"/><line x1="23.7" y1="337.7" x2="143.7" y2="247.7"/><line x1="30.7" y1="337.7" x2="150.7" y2="247.7"/><line x1="37.7" y1="337.7" x2="157.7" y2="247.7"/><line x1="44.7" y1="337.7" x2="164.7" y2="247.7"/><line x1="51.7" y1="337.7" x2="171.7" y2="247.7"/><line x1="58.7" y1="337.7" x2="178.7" y2="247.7"/><line x1="65.7" y1="337.7" x2="185.7" y2="247.7"/><line x1="72.7" y1="337.7" x2="192.7" y2="247.7"/><line x1="79.7" y1="337.7" x2="199.7" y2="247.7"/><line x1="86.7" y1="337.7" x2="206.7" y2="247.7"/><line x1="93.7" y1="337.7" x2="213.7" y2="247.7"/><line x1="100.7" y1="337.7" x2="220.7" y2="247.7"/><line x1="107.7" y1="337.7" x2="227.7" y2="247.7"/><line x1="114.7" y1="337.7" x2="234.7" y2="247.7"/><line x1="121.7" y1="337.7" x2="241.7" y2="247.7"/><line x1="128.7" y1="337.7" x2="248.7" y2="247.7"/><line x1="135.7" y1="337.7" x2="255.7" y2="247.7"/><line x1="142.7" y1="337.7" x2="262.7" y2="247.7"/><line x1="149.7" y1="337.7" x2="269.7" y2="247.7"/><line x1="156.7" y1="337.7" x2="276.7" y2="247.7"/><line x1="163.7" y1="337.7" x2="283.7" y2="247.7"/><line x1="170.7" y1="337.7" x2="290.7" y2="247.7"/><line x1="177.7" y1="337.7" x2="297.7" y2="247.7"/><line x1="184.7" y1="337.7" x2="304.7" y2="247.7"/><line x1="191.7" y1="337.7" x2="311.7" y2="247.7"/><line x1="198.7" y1="337.7" x2="318.7" y2="247.7"/><line x1="205.7" y1="337.7" x2="325.7" y2="247.7"/><line x1="212.7" y1="337.7" x2="332.7" y2="247.7"/><line x1="219.7" y1="337.7" x2="339.7" y2="247.7"/><line x1="226.7" y1="337.7" x2="346.7" y2="247.7"/><line x1="233.7" y1="337.7" x2="353.7" y2="247.7"/><line x1="240.7" y1="337.7" x2="360.7" y2="247.7"/><line x1="247.7" y1="337.7" x2="367.7" y2="247.7"/><line x1="254.7" y1="337.7" x2="374.7" y2="247.7"/><line x1="261.7" y1="337.7" x2="381.7" y2="247.7"/><line x1="268.7" y1="337.7" x2="388.7" y2="247.7"/><line x1="275.7" y1="337.7" x2="395.7" y2="247.7"/><line x1="282.7" y1="337.7" x2="402.7" y2="247.7"/><line x1="289.7" y1="337.7" x2="409.7" y2="247.7"/><line x1="296.7" y1="337.7" x2="416.7" y2="247.7"/><line x1="303.7" y1="337.7" x2="423.7" y2="247.7"/></g><line x1="88" y1="397.3" x2="576" y2="397.3" stroke="#b80808" stroke-width="1.1" stroke-dasharray="11 2.5 1.5 2.5"/><polyline points="226,247 252,247 454.7,397.3 412,429" fill="none" stroke="#b80808" stroke-width="1.1" stroke-dasharray="11 2.5 1.5 2.5"/><line x1="454.7" y1="123" x2="454.7" y2="397" stroke="#bdbdbd" stroke-width="1"/><line x1="155.3" y1="127.4" x2="454.7" y2="127.4" stroke="#bdbdbd" stroke-width="1"/><path d="M155.8 127.4 L163.8 125.9 L163.8 128.9Z" fill="#f0f0f0"/><path d="M454.2 127.4 L446.2 125.9 L446.2 128.9Z" fill="#f0f0f0"/><line x1="324.4" y1="153" x2="324.4" y2="286" stroke="#bdbdbd" stroke-width="1"/><line x1="155.3" y1="157.4" x2="324.4" y2="157.4" stroke="#bdbdbd" stroke-width="1"/><path d="M155.8 157.4 L163.8 155.9 L163.8 158.9Z" fill="#f0f0f0"/><path d="M323.9 157.4 L315.9 155.9 L315.9 158.9Z" fill="#f0f0f0"/><line x1="282.2" y1="183" x2="282.2" y2="251" stroke="#bdbdbd" stroke-width="1"/><line x1="155.3" y1="187.4" x2="282.2" y2="187.4" stroke="#bdbdbd" stroke-width="1"/><path d="M155.8 187.4 L163.8 185.9 L163.8 188.9Z" fill="#f0f0f0"/><path d="M281.7 187.4 L273.7 185.9 L273.7 188.9Z" fill="#f0f0f0"/><line x1="284" y1="250.8" x2="519" y2="250.8" stroke="#bdbdbd" stroke-width="1"/><line x1="514.3" y1="251" x2="514.3" y2="427" stroke="#bdbdbd" stroke-width="1"/><path d="M514.3 251.5 L512.8 258.5 L515.8 258.5Z" fill="#f0f0f0"/><line x1="327" y1="286.2" x2="479" y2="286.2" stroke="#bdbdbd" stroke-width="1"/><line x1="474.5" y1="286.5" x2="474.5" y2="427" stroke="#bdbdbd" stroke-width="1"/><path d="M474.5 287 L473.0 294 L476.0 294Z" fill="#f0f0f0"/><line x1="88" y1="292" x2="153" y2="292" stroke="#9a9a9a" stroke-width="1.2"/><line x1="145" y1="374.4" x2="172" y2="374.4" stroke="#e0e0e0" stroke-width="1.3"/><ellipse cx="146.5" cy="374.4" rx="2.2" ry="1.3" fill="#fff"/><ellipse cx="170.5" cy="374.4" rx="2.2" ry="1.3" fill="#fff"/><polyline points="155.3,426 155.3,342.4 161.3,346.5 303,346.5" fill="none" stroke="#ffffff" stroke-width="1.4" stroke-linejoin="miter"/><polyline points="155.3,342.4 155.3,292.5 227.5,292.5 282.2,250.8 324.4,286.2 306.2,300.2 259.3,268.5" fill="none" stroke="#ffffff" stroke-width="1.4" stroke-linejoin="miter"/><polyline points="306.2,300.2 303,302.8 303,427" fill="none" stroke="#ffffff" stroke-width="1.4" stroke-linejoin="miter"/><polyline points="324.4,286.2 324.4,427" fill="none" stroke="#ffffff" stroke-width="1.4" stroke-linejoin="miter"/><polyline points="155.3,334 303,334" fill="none" stroke="#ffffff" stroke-width="1.4" stroke-linejoin="miter"/><polyline points="161.3,346.5 161.3,427" fill="none" stroke="#ffffff" stroke-width="1.4" stroke-linejoin="miter"/><line x1="155.3" y1="385.4" x2="155.3" y2="409" stroke="#e85050" stroke-width="1.4"/><rect x="151" y="283.7" width="7.5" height="5.7" fill="#0000c8"/><g transform="translate(292.3 116) scale(0.9366 0.9556)" fill="none" stroke="#d8d8d8" stroke-width="0.898" stroke-linecap="round" stroke-linejoin="round"><path transform="translate(0 0)" d="M0 0 L6 0 L2 9"/><path transform="translate(8.2 0)" d="M5.8 0 L0.7 0 L0.3 4 C1 3.6 2 3.3 3 3.3 C5 3.3 6 4.5 6 6.2 C6 8 4.8 9 3 9 C1.6 9 0.6 8.5 0 7.6"/></g><g transform="translate(307 116.5) scale(0.5000 0.4222)" fill="none" stroke="#d8d8d8" stroke-width="1.518" stroke-linecap="round" stroke-linejoin="round"><path transform="translate(0 0)" d="M3 0 C0.6 0 0 2 0 4.5 C0 7 0.6 9 3 9 C5.4 9 6 7 6 4.5 C6 2 5.4 0 3 0Z"/></g><g transform="translate(310.5 121) scale(0.4076 0.4222)" fill="none" stroke="#d8d8d8" stroke-width="1.687" stroke-linecap="round" stroke-linejoin="round"><path transform="translate(0 0)" d="M0.6 8.4 L1.4 8.4 L1.4 9 L0.6 9Z"/><path transform="translate(4.2 0)" d="M3 0 C0.6 0 0 2 0 4.5 C0 7 0.6 9 3 9 C5.4 9 6 7 6 4.5 C6 2 5.4 0 3 0Z"/><path transform="translate(12.399999999999999 0)" d="M5.8 0 L0.7 0 L0.3 4 C1 3.6 2 3.3 3 3.3 C5 3.3 6 4.5 6 6.2 C6 8 4.8 9 3 9 C1.6 9 0.6 8.5 0 7.6"/></g><g transform="translate(307 121) scale(0.5000 0.4222)" fill="none" stroke="#d8d8d8" stroke-width="1.518" stroke-linecap="round" stroke-linejoin="round"><path transform="translate(0 0)" d="M3 0 C0.6 0 0 2 0 4.5 C0 7 0.6 9 3 9 C5.4 9 6 7 6 4.5 C6 2 5.4 0 3 0Z"/></g><g transform="translate(222.9 146.3) scale(0.9914 0.9333)" fill="none" stroke="#d8d8d8" stroke-width="0.883" stroke-linecap="round" stroke-linejoin="round"><path transform="translate(0 0)" d="M4.6 9 L4.6 0 L0 6.6 L6 6.6"/><path transform="translate(8.2 0)" d="M0.2 2.2 C0.4 0.7 1.5 0 3 0 C4.7 0 5.8 0.9 5.8 2.5 C5.8 4.6 0.3 7 0 9 L6 9"/><path transform="translate(16.4 0)" d="M0.6 8.4 L1.4 8.4 L1.4 9 L0.6 9Z"/><path transform="translate(20.599999999999998 0)" d="M4.6 9 L4.6 0 L0 6.6 L6 6.6"/><path transform="translate(28.799999999999997 0)" d="M0.3 0 L5.8 0 L2.8 3.6 C4.8 3.5 6 4.5 6 6.2 C6 8 4.8 9 3 9 C1.6 9 0.6 8.5 0 7.6"/></g><g transform="translate(191.7 176.2) scale(0.8695 0.9333)" fill="none" stroke="#d8d8d8" stroke-width="0.943" stroke-linecap="round" stroke-linejoin="round"><path transform="translate(0 0)" d="M0.3 0 L5.8 0 L2.8 3.6 C4.8 3.5 6 4.5 6 6.2 C6 8 4.8 9 3 9 C1.6 9 0.6 8.5 0 7.6"/><path transform="translate(8.2 0)" d="M1 1.8 L3.2 0 L3.2 9"/><path transform="translate(16.4 0)" d="M0.6 8.4 L1.4 8.4 L1.4 9 L0.6 9Z"/><path transform="translate(20.599999999999998 0)" d="M3 4.1 C1.1 4.1 0.4 3.2 0.4 2 C0.4 0.8 1.4 0 3 0 C4.6 0 5.6 0.8 5.6 2 C5.6 3.2 4.9 4.1 3 4.1 C1 4.1 0 5 0 6.5 C0 8.2 1.3 9 3 9 C4.7 9 6 8.2 6 6.5 C6 5 5 4.1 3 4.1Z"/><path transform="translate(28.799999999999997 0)" d="M0.3 0 L5.8 0 L2.8 3.6 C4.8 3.5 6 4.5 6 6.2 C6 8 4.8 9 3 9 C1.6 9 0.6 8.5 0 7.6"/><path transform="translate(37.0 0)" d="M3 1.5 L3 6.5 M0.3 4 L5.7 4 M0.3 8.8 L5.7 8.8"/><path transform="translate(45.2 0)" d="M3 0 C0.6 0 0 2 0 4.5 C0 7 0.6 9 3 9 C5.4 9 6 7 6 4.5 C6 2 5.4 0 3 0Z"/><path transform="translate(53.400000000000006 0)" d="M0.6 8.4 L1.4 8.4 L1.4 9 L0.6 9Z"/><path transform="translate(57.60000000000001 0)" d="M1 1.8 L3.2 0 L3.2 9"/></g><g transform="translate(135.8 363.4) scale(0.9228 0.9556)" fill="none" stroke="#d8d8d8" stroke-width="0.905" stroke-linecap="round" stroke-linejoin="round"><path transform="translate(0 0)" d="M1 1.8 L3.2 0 L3.2 9"/><path transform="translate(8.2 0)" d="M0.6 8.4 L1.4 8.4 L1.4 9 L0.6 9Z"/><path transform="translate(12.399999999999999 0)" d="M5.8 0 L0.7 0 L0.3 4 C1 3.6 2 3.3 3 3.3 C5 3.3 6 4.5 6 6.2 C6 8 4.8 9 3 9 C1.6 9 0.6 8.5 0 7.6"/><path transform="translate(20.599999999999998 0)" d="M0.3 3 L5.7 9 M5.7 3 L0.3 9"/><path transform="translate(28.799999999999997 0)" d="M4.6 9 L4.6 0 L0 6.6 L6 6.6"/><path transform="translate(37.0 0)" d="M5.8 0 L0.7 0 L0.3 4 C1 3.6 2 3.3 3 3.3 C5 3.3 6 4.5 6 6.2 C6 8 4.8 9 3 9 C1.6 9 0.6 8.5 0 7.6"/><path transform="translate(45.2 0)" d="M2 0 C0.9 0 0.4 0.6 0.4 1.6 C0.4 2.6 0.9 3.2 2 3.2 C3.1 3.2 3.6 2.6 3.6 1.6 C3.6 0.6 3.1 0 2 0Z"/></g><g transform="translate(230.5 230.3) scale(0.9296 0.8444)" fill="none" stroke="#d8d8d8" stroke-width="0.958" stroke-linecap="round" stroke-linejoin="round"><path transform="translate(0 0)" d="M0 9 L0 0 L6 9 L6 0"/><path transform="translate(8.2 0)" d="M5.5 0.8 C5 0.3 4.1 0 3.1 0 C1 0 0 2 0 5 C0 7.8 1 9 3 9 C5 9 6 7.9 6 6.2 C6 4.4 5 3.5 3.1 3.5 C1.6 3.5 0.6 4.2 0 5.3"/></g><path d="M232 239.5 L244.5 239.5 M232 239.5 L238 247 L251 230" fill="none" stroke="#d8d8d8" stroke-width="0.9"/><path d="M145.5 313.5 L145.5 322.5 M145.5 313.5 L155 318 L145.5 322.5 M145.5 313.5 L133 307.5" fill="none" stroke="#d8d8d8" stroke-width="0.9"/><g transform="translate(134.5 330) rotate(-90) scale(0.9859 1.0556)" fill="none" stroke="#d8d8d8" stroke-width="0.833" stroke-linecap="round" stroke-linejoin="round"><path transform="translate(0 0)" d="M0 9 L0 0 L6 9 L6 0"/><path transform="translate(8.2 0)" d="M5.5 0.8 C5 0.3 4.1 0 3.1 0 C1 0 0 2 0 5 C0 7.8 1 9 3 9 C5 9 6 7.9 6 6.2 C6 4.4 5 3.5 3.1 3.5 C1.6 3.5 0.6 4.2 0 5.3"/></g><g transform="translate(461.6 412.8) rotate(-90) scale(0.7512 1.0444)" fill="none" stroke="#d8d8d8" stroke-width="0.947" stroke-linecap="round" stroke-linejoin="round"><path transform="translate(0 0)" d="M3 0.8 C0.9 0.8 0.4 2.8 0.4 5 C0.4 7.2 0.9 9 3 9 C5.1 9 5.6 7.2 5.6 5 C5.6 2.8 5.1 0.8 3 0.8Z M-0.3 9.6 L6.3 0.2"/><path transform="translate(8.2 0)" d="M0 0 L6 0 L2 9"/><path transform="translate(16.4 0)" d="M0.3 0 L5.8 0 L2.8 3.6 C4.8 3.5 6 4.5 6 6.2 C6 8 4.8 9 3 9 C1.6 9 0.6 8.5 0 7.6"/><path transform="translate(24.599999999999998 0)" d="M0.6 8.4 L1.4 8.4 L1.4 9 L0.6 9Z"/><path transform="translate(28.799999999999997 0)" d="M5.5 0.8 C5 0.3 4.1 0 3.1 0 C1 0 0 2 0 5 C0 7.8 1 9 3 9 C5 9 6 7.9 6 6.2 C6 4.4 5 3.5 3.1 3.5 C1.6 3.5 0.6 4.2 0 5.3"/><path transform="translate(37.0 0)" d="M4.6 9 L4.6 0 L0 6.6 L6 6.6"/></g><g transform="translate(500.5 422.7) rotate(-90) scale(0.7073 1.1667)" fill="none" stroke="#d8d8d8" stroke-width="0.907" stroke-linecap="round" stroke-linejoin="round"><path transform="translate(0 0)" d="M3 0.8 C0.9 0.8 0.4 2.8 0.4 5 C0.4 7.2 0.9 9 3 9 C5.1 9 5.6 7.2 5.6 5 C5.6 2.8 5.1 0.8 3 0.8Z M-0.3 9.6 L6.3 0.2"/><path transform="translate(8.2 0)" d="M6 3.8 C5.4 5 4.4 5.5 2.9 5.5 C1 5.5 0 4.5 0 2.8 C0 1 1 0 3 0 C5 0 6 1.2 6 4 C6 7 5 9 2.9 9 C1.9 9 1 8.7 0.5 8.2"/><path transform="translate(16.4 0)" d="M0 0 L6 0 L2 9"/><path transform="translate(24.599999999999998 0)" d="M0.6 8.4 L1.4 8.4 L1.4 9 L0.6 9Z"/><path transform="translate(28.799999999999997 0)" d="M5.5 0.8 C5 0.3 4.1 0 3.1 0 C1 0 0 2 0 5 C0 7.8 1 9 3 9 C5 9 6 7.9 6 6.2 C6 4.4 5 3.5 3.1 3.5 C1.6 3.5 0.6 4.2 0 5.3"/><path transform="translate(37.0 0)" d="M5.5 0.8 C5 0.3 4.1 0 3.1 0 C1 0 0 2 0 5 C0 7.8 1 9 3 9 C5 9 6 7.9 6 6.2 C6 4.4 5 3.5 3.1 3.5 C1.6 3.5 0.6 4.2 0 5.3"/><path transform="translate(51.400000000000006 0)" d="M0 0 L0 9 M0 5 C0.8 3.6 2 3 3.4 3 C5 3 6 3.9 6 5.4 L6 9"/><path transform="translate(59.60000000000001 0)" d="M1 1.8 L3.2 0 L3.2 9"/><path transform="translate(67.80000000000001 0)" d="M1 1.8 L3.2 0 L3.2 9"/></g></svg>
<div class="a" style="left:576px;top:96px;width:15px;height:331px;background:#f0f0f0"></div>
<svg style="left:580.5px;top:99.5px" width="7" height="4"><path d="M0.5 3.2 L3 0.5 L5.5 3.2Z" fill="#444"/></svg>
<svg style="left:580.5px;top:420px" width="7" height="4"><path d="M0.5 0.5 L3 3.2 L5.5 0.5Z" fill="#444"/></svg>
<div class="a" style="left:577px;top:206px;width:12px;height:70px;border:1px solid #a8a8a8;border-radius:2px;background:linear-gradient(90deg,#f4f4f4,#e6e6e6 50%,#d8d8d8)"></div>
<div class="a" style="left:581px;top:239px;width:5px;height:5px;background:repeating-linear-gradient(#777 0 1px,transparent 1px 2px)"></div>
<div class="a" style="left:88px;top:427px;width:504px;height:10px;background:#f0f0f0"></div>
<svg style="left:92.5px;top:429.5px" width="5" height="6"><path d="M3.5 0.5 L0.5 3 L3.5 5.5Z" fill="#333"/></svg>
<svg style="left:534px;top:429.5px" width="5" height="6"><path d="M0.5 0.5 L3.5 3 L0.5 5.5Z" fill="#333"/></svg>
<div class="a" style="left:244px;top:427.5px;width:98px;height:9px;border:1px solid #a8a8a8;border-radius:2px;background:linear-gradient(#f4f4f4,#e6e6e6 50%,#d8d8d8)"></div>
<div class="a" style="left:290px;top:430px;width:5px;height:4px;background:repeating-linear-gradient(90deg,#777 0 1px,transparent 1px 2px)"></div>
<div class="a" style="left:72px;top:427px;width:16px;height:10px;background:#f0f0f0;border-top:1px solid #ddd;border-right:1px solid #ddd"></div>
<div class="t" style="left:558.5px;top:428.3px;font-size:8.2px;color:#222;">10 / 100</div>
<div class="a" style="left:591px;top:67px;width:203px;height:370px;background:#f0f0f0"></div>
<div class="a" style="left:592px;top:69px;width:201px;height:13px;background:#dcdcdc"></div>
<div class="t" style="left:593.2px;top:71px;font-size:8.4px;color:#2a2a2a;">Property Editor</div>
<svg style="left:771px;top:72px" width="20" height="8"><rect x="0.5" y="2.8" width="4.6" height="3.4" fill="none" stroke="#222" stroke-width="1"/><rect x="2.5" y="0.6" width="4.6" height="3.4" fill="#dcdcdc" stroke="#222" stroke-width="1"/><path d="M13 1 L18.6 5.8 M18.6 1 L13 5.8" stroke="#222" stroke-width="1.3"/></svg>
<div class="a" style="left:592px;top:82px;width:201px;height:214px;background:#f0f0f0;border:1px solid #d6d6d6"></div>
<div class="a" style="left:781px;top:83px;width:12px;height:213px;background:linear-gradient(90deg,#e8e8e8,#f4f4f4)"></div>
<svg style="left:784px;top:86px" width="7" height="4"><path d="M0.3 3 L2.7 0.4 L5.1 3Z" fill="#555"/></svg>
<svg style="left:784px;top:290px" width="7" height="4"><path d="M0.3 0.4 L2.7 3 L5.1 0.4Z" fill="#555"/></svg>
<div class="a" style="left:781px;top:93px;width:11px;height:145px;border:1px solid #b0b0b0;border-radius:2px;background:linear-gradient(90deg,#f6f6f6,#e4e4e4 50%,#d2d2d2)"></div>
<div class="a" style="left:784px;top:163px;width:5px;height:5px;background:repeating-linear-gradient(#777 0 1px,transparent 1px 2px)"></div>
<div class="t" style="left:599.5px;top:90px;font-size:8px;color:#1f1f1f;">Selection:</div>
<div class="cmb" style="left:641px;top:87.5px;width:131.5px;height:11px"></div>
<div class="t" style="left:644px;top:89.5px;font-size:8px;color:#1f1f1f;">Line (1)</div>
<svg style="left:762.5px;top:92px" width="7" height="4"><path d="M0 0 L5.2 0 L2.6 2.8Z" fill="#111"/></svg>
<div class="a" style="left:601px;top:106px;width:171px;height:89px;border:1px solid #dde4ec;border-radius:2px"></div>
<div class="a" style="left:605px;top:102px;width:32px;height:7px;background:#f0f0f0"></div>
<div class="t" style="left:606.5px;top:102.5px;font-size:7.8px;color:#1f1f1f;">General</div>
<div class="t" style="right:147px;top:116.3px;font-size:8.25px;color:#1f1f1f;">Layer:</div>
<div class="cmb" style="left:658.5px;top:114.5px;width:87px;height:11px;background:linear-gradient(#fafafa,#f0f0f0 50%,#e6e6e6 51%,#dedede)"></div>
<div class="t" style="left:661px;top:116.5px;font-size:8px;color:#1f1f1f;">construction</div>
<svg style="left:735.5px;top:119px" width="7" height="4"><path d="M0 0 L5.2 0 L2.6 2.8Z" fill="#111"/></svg>
<svg style="left:754px;top:116px" width="8" height="8"><path d="M4 0.5 L4 7 M0.5 3.8 L7.5 3.8" stroke="#e01818" stroke-width="1.5"/></svg>
<div class="t" style="right:147px;top:128.8px;font-size:8.25px;color:#1f1f1f;">Color:</div>
<div class="cmb" style="left:658.5px;top:127px;width:107px;height:12px"></div>
<svg style="left:755.5px;top:132px" width="7" height="4"><path d="M0 0 L5.2 0 L2.6 2.8Z" fill="#111"/></svg>
<div class="t" style="right:147px;top:142.8px;font-size:8.25px;color:#1f1f1f;">Lineweight:</div>
<div class="cmb" style="left:658.5px;top:141px;width:107px;height:12px"></div>
<svg style="left:755.5px;top:146px" width="7" height="4"><path d="M0 0 L5.2 0 L2.6 2.8Z" fill="#111"/></svg>
<div class="t" style="right:147px;top:156.3px;font-size:8.25px;color:#1f1f1f;">Linetype:</div>
<div class="cmb" style="left:658.5px;top:154.5px;width:107px;height:12px"></div>
<svg style="left:755.5px;top:159.5px" width="7" height="4"><path d="M0 0 L5.2 0 L2.6 2.8Z" fill="#111"/></svg>
<div class="a" style="left:662px;top:130px;width:25px;height:6.5px;background:#fff;border:1px solid #111"></div>
<div class="t" style="left:688.5px;top:129px;font-size:8px;color:#1f1f1f;">By Layer</div>
<div class="a" style="left:663px;top:146.5px;width:25px;height:1px;background:#222"></div>
<div class="t" style="left:688.5px;top:143px;font-size:8px;color:#1f1f1f;">By Layer</div>
<div class="t" style="left:688.5px;top:156.5px;font-size:8px;color:#1f1f1f;">By Layer</div>
<div class="t" style="right:147px;top:170.3px;font-size:8.25px;color:#1f1f1f;">Draw Order:</div>
<div class="inp" style="left:658.5px;top:168.5px;width:107px;height:11px"></div>
<div class="t" style="left:661px;top:170.5px;font-size:8px;color:#1f1f1f;">30</div>
<div class="t" style="right:147px;top:182.8px;font-size:8.25px;color:#1f1f1f;">Handle:</div>
<div class="inp" style="left:658.5px;top:181px;width:107px;height:11px;background:#ececec;border-color:#e0e0e0"></div>
<div class="t" style="left:661px;top:183px;font-size:8px;color:#1f1f1f;">0x70</div>
<div class="a" style="left:601px;top:204px;width:171px;height:95px;border:1px solid #dde4ec;border-radius:2px"></div>
<div class="a" style="left:605px;top:200px;width:38px;height:7px;background:#f0f0f0"></div>
<div class="t" style="left:606.5px;top:200.5px;font-size:7.8px;color:#1f1f1f;">Geometry</div>
<div class="t" style="right:164px;top:215.60000000000002px;font-size:8.25px;color:#1f1f1f;">Length:</div>
<div class="inp" style="left:641.5px;top:213.8px;width:123px;height:11px"></div>
<div class="t" style="left:644px;top:215.8px;font-size:8px;color:#1f1f1f;">120</div>
<div class="t" style="right:164px;top:229.20000000000002px;font-size:8.25px;color:#1f1f1f;">Angle:</div>
<div class="inp" style="left:641.5px;top:227.4px;width:123px;height:11px"></div>
<div class="t" style="left:644px;top:229.4px;font-size:8px;color:#1f1f1f;">0</div>
<div class="t" style="right:164px;top:253.4px;font-size:8.25px;color:#1f1f1f;">X:</div>
<div class="inp" style="left:641.5px;top:251.6px;width:123px;height:11px"></div>
<div class="t" style="left:644px;top:253.6px;font-size:8px;color:#1f1f1f;">0</div>
<div class="t" style="right:164px;top:267.3px;font-size:8.25px;color:#1f1f1f;">Y:</div>
<div class="inp" style="left:641.5px;top:265.5px;width:123px;height:11px"></div>
<div class="t" style="left:644px;top:267.5px;font-size:8px;color:#1f1f1f;">36.82</div>
<div class="t" style="right:164px;top:291.5px;font-size:8.25px;color:#1f1f1f;">X:</div>
<div class="inp" style="left:641.5px;top:289.7px;width:123px;height:11px"></div>
<div class="t" style="left:644px;top:291.7px;font-size:8px;color:#1f1f1f;">120</div>
<div class="t" style="left:607.5px;top:241.3px;font-size:9px;color:#111;font-weight:bold;transform:scaleY(0.86);transform-origin:0 0">Start Point</div>
<div class="t" style="left:607.5px;top:279.3px;font-size:9px;color:#111;font-weight:bold;transform:scaleY(0.86);transform-origin:0 0">End Point</div>
<div class="a" style="left:591px;top:296px;width:203px;height:4px;background:#f0f0f0"></div>
<div class="a" style="left:592px;top:296px;width:189px;height:1px;background:#c8c8c8"></div>
<div class="a" style="left:592px;top:300px;width:201px;height:11px;background:#dcdcdc"></div>
<div class="t" style="left:593.2px;top:300.6px;font-size:8.4px;color:#2a2a2a;">Layer List</div>
<svg style="left:771px;top:302px" width="20" height="8"><rect x="0.5" y="2.8" width="4.6" height="3.4" fill="none" stroke="#222" stroke-width="1"/><rect x="2.5" y="0.6" width="4.6" height="3.4" fill="#dcdcdc" stroke="#222" stroke-width="1"/><path d="M13 1 L18.6 5.8 M18.6 1 L13 5.8" stroke="#222" stroke-width="1.3"/></svg>
<div class="btn" style="left:593.5px;top:312px;width:37.8px;height:12px;border-radius:2px;border-color:#9f9f9f;"></div>
<svg style="left:606.9px;top:314px" width="12" height="9"><path d="M0.3 4.2 C3 0.5 9 0.2 11.5 3.6 C9.5 8 3 8.3 0.3 4.2Z" fill="#111"/><path d="M3 4.5 C5 6.2 7.5 6 9 4" fill="none" stroke="#fff" stroke-width=".9" opacity=".8"/></svg>
<div class="btn" style="left:633.5px;top:312px;width:38.1px;height:12px;border-radius:2px;border-color:#9f9f9f;"></div>
<svg style="left:647.05px;top:314px" width="12" height="9"><path d="M0.3 4.2 C3 0.5 9 0.2 11.5 3.6 C9.5 8 3 8.3 0.3 4.2Z" fill="#c4c4c4"/><path d="M3 4.5 C5 6.2 7.5 6 9 4" fill="none" stroke="#fff" stroke-width=".9" opacity=".8"/></svg>
<div class="btn" style="left:674px;top:312px;width:38.5px;height:12px;border-radius:2px;border-color:#9f9f9f;"></div>
<svg style="left:688.75px;top:313.5px" width="9" height="9"><path d="M4.5 0.5 L4.5 8.5 M0.5 4.5 L8.5 4.5" stroke="#d81818" stroke-width="2"/></svg>
<div class="btn" style="left:714.2px;top:312px;width:38.1px;height:12px;border-radius:2px;border-color:#9f9f9f;background:linear-gradient(#fbfbfb,#f2f2f2);border-color:#c4c4c4;"></div>
<svg style="left:729.25px;top:313.5px" width="9" height="9"><path d="M0.5 4.5 L8 4.5" stroke="#888" stroke-width="1.5"/></svg>
<div class="btn" style="left:754.2px;top:312px;width:38.5px;height:12px;border-radius:2px;border-color:#9f9f9f;"></div>
<svg style="left:768.45px;top:313px" width="11" height="10"><path d="M1 9 L2 6.5 L8.5 0.5 L10 2 L3.5 8Z" fill="#e8b040" stroke="#9a6a20" stroke-width=".6"/></svg>
<div class="a" style="left:592.5px;top:325px;width:201px;height:112px;background:#fff;border:1px solid #a9a9a9;border-top:none"></div>
<div class="a" style="left:593.5px;top:326px;width:198px;height:10.3px;background:linear-gradient(#f4f4f4,#e9e9e9)"></div>
<svg style="left:596px;top:326.5px" width="24" height="10"><path d="M0.3 4.2 C3 0.5 9 0.2 11.8 3.6 C9.5 8 3 8.3 0.3 4.2Z" fill="#244e80"/><path d="M3 4.5 C5 6.2 7.5 6 9 4" fill="none" stroke="#fff" stroke-width=".9" opacity=".85"/><circle cx="6" cy="4" r="1.3" fill="#244e80"/><path d="M16.3 5 L16.3 2.8 C16.3 0.3 22.3 0.3 22.3 2.8 L22.3 5" fill="#fff" stroke="#8fb0d8" stroke-width="1"/><rect x="15.6" y="4.8" width="7.4" height="4.2" fill="#8fb0d8"/></svg>
<div class="t" style="left:625.4px;top:327.6px;font-size:8.9px;color:#222;letter-spacing:0.15px;transform:scaleY(0.84);transform-origin:0 0">0</div>
<svg style="left:596px;top:337.0px" width="24" height="10"><path d="M0.3 4.2 C3 0.5 9 0.2 11.8 3.6 C9.5 8 3 8.3 0.3 4.2Z" fill="#111"/><path d="M3 4.5 C5 6.2 7.5 6 9 4" fill="none" stroke="#fff" stroke-width=".9" opacity=".85"/><circle cx="6" cy="4" r="1.3" fill="#111"/><path d="M16.3 5 L16.3 2.8 C16.3 0.3 22.3 0.3 22.3 2.8 L22.3 5" fill="#fff" stroke="#b4b4b4" stroke-width="1"/><rect x="15.6" y="4.8" width="7.4" height="4.2" fill="#b4b4b4"/></svg>
<div class="t" style="left:625.4px;top:338.1px;font-size:8.9px;color:#222;letter-spacing:0.15px;transform:scaleY(0.84);transform-origin:0 0">axes</div>
<svg style="left:596px;top:347.5px" width="24" height="10"><path d="M0.3 4.2 C3 0.5 9 0.2 11.8 3.6 C9.5 8 3 8.3 0.3 4.2Z" fill="#c2c2c2"/><path d="M3 4.5 C5 6.2 7.5 6 9 4" fill="none" stroke="#fff" stroke-width=".9" opacity=".85"/><circle cx="6" cy="4" r="1.3" fill="#c2c2c2"/><path d="M16.3 5 L16.3 2.8 C16.3 0.3 22.3 0.3 22.3 2.8 L22.3 5" fill="#fff" stroke="#b4b4b4" stroke-width="1"/><rect x="15.6" y="4.8" width="7.4" height="4.2" fill="#b4b4b4"/></svg>
<div class="t" style="left:625.4px;top:348.6px;font-size:8.9px;color:#222;letter-spacing:0.15px;transform:scaleY(0.84);transform-origin:0 0">construction</div>
<svg style="left:596px;top:358.0px" width="24" height="10"><path d="M0.3 4.2 C3 0.5 9 0.2 11.8 3.6 C9.5 8 3 8.3 0.3 4.2Z" fill="#111"/><path d="M3 4.5 C5 6.2 7.5 6 9 4" fill="none" stroke="#fff" stroke-width=".9" opacity=".85"/><circle cx="6" cy="4" r="1.3" fill="#111"/><path d="M16.3 5 L16.3 2.8 C16.3 0.3 22.3 0.3 22.3 2.8 L22.3 5" fill="#fff" stroke="#b4b4b4" stroke-width="1"/><rect x="15.6" y="4.8" width="7.4" height="4.2" fill="#b4b4b4"/></svg>
<div class="t" style="left:625.4px;top:359.1px;font-size:8.9px;color:#222;letter-spacing:0.15px;transform:scaleY(0.84);transform-origin:0 0">contour</div>
<svg style="left:596px;top:368.5px" width="24" height="10"><path d="M0.3 4.2 C3 0.5 9 0.2 11.8 3.6 C9.5 8 3 8.3 0.3 4.2Z" fill="#111"/><path d="M3 4.5 C5 6.2 7.5 6 9 4" fill="none" stroke="#fff" stroke-width=".9" opacity=".85"/><circle cx="6" cy="4" r="1.3" fill="#111"/><path d="M16.3 5 L16.3 2.8 C16.3 0.3 22.3 0.3 22.3 2.8 L22.3 5" fill="#fff" stroke="#b4b4b4" stroke-width="1"/><rect x="15.6" y="4.8" width="7.4" height="4.2" fill="#b4b4b4"/></svg>
<div class="t" style="left:625.4px;top:369.6px;font-size:8.9px;color:#222;letter-spacing:0.15px;transform:scaleY(0.84);transform-origin:0 0">dim</div>
<svg style="left:596px;top:378.8px" width="24" height="10"><path d="M0.3 4.2 C3 0.5 9 0.2 11.8 3.6 C9.5 8 3 8.3 0.3 4.2Z" fill="#111"/><path d="M3 4.5 C5 6.2 7.5 6 9 4" fill="none" stroke="#fff" stroke-width=".9" opacity=".85"/><circle cx="6" cy="4" r="1.3" fill="#111"/><path d="M16.3 5 L16.3 2.8 C16.3 0.3 22.3 0.3 22.3 2.8 L22.3 5" fill="#fff" stroke="#b4b4b4" stroke-width="1"/><rect x="15.6" y="4.8" width="7.4" height="4.2" fill="#b4b4b4"/></svg>
<div class="t" style="left:625.4px;top:379.90000000000003px;font-size:8.9px;color:#222;letter-spacing:0.15px;transform:scaleY(0.84);transform-origin:0 0">hatch</div>
<svg style="left:596px;top:389.1px" width="24" height="10"><path d="M0.3 4.2 C3 0.5 9 0.2 11.8 3.6 C9.5 8 3 8.3 0.3 4.2Z" fill="#111"/><path d="M3 4.5 C5 6.2 7.5 6 9 4" fill="none" stroke="#fff" stroke-width=".9" opacity=".85"/><circle cx="6" cy="4" r="1.3" fill="#111"/><path d="M16.3 5 L16.3 2.8 C16.3 0.3 22.3 0.3 22.3 2.8 L22.3 5" fill="#fff" stroke="#b4b4b4" stroke-width="1"/><rect x="15.6" y="4.8" width="7.4" height="4.2" fill="#b4b4b4"/></svg>
<div class="t" style="left:625.4px;top:390.20000000000005px;font-size:8.9px;color:#222;letter-spacing:0.15px;transform:scaleY(0.84);transform-origin:0 0">hatch_border</div>
<div class="a" style="left:6px;top:437px;width:788px;height:36px;background:#f0f0f0"></div>
<div class="a" style="left:6.5px;top:437.5px;width:787px;height:23px;background:#fff;border:1px solid #a0a0a0;border-top:none"></div>
<div class="a" style="left:7px;top:438px;width:773px;height:22px;overflow:hidden"><div class="t" style="left:3.3px;top:-2.8px;font-size:8.1px;color:#2a2ad0"><i>Command:</i> snapauto</div><div class="t" style="left:3.3px;top:4.6px;font-size:8.1px;color:#2a2ad0"><i>Command:</i> snapauto</div><div class="t" style="left:3.3px;top:11.9px;font-size:8.1px;color:#2a2ad0"><i>Command:</i> linemenu</div></div>
<div class="a" style="left:781px;top:438px;width:12px;height:22px;background:#f0f0f0"></div>
<svg style="left:781px;top:440px" width="12" height="20"><path d="M4 6 L6.3 3.4 L8.6 6Z" fill="#555"/><path d="M4 13.4 L6.3 16 L8.6 13.4Z" fill="#555"/></svg>
<div class="a" style="left:6.5px;top:460.5px;width:787px;height:13px;background:#fff;border:1px solid #a0a0a0;border-top:none"></div>
<div class="t" style="left:7px;top:463.8px;font-size:8px;color:#222;">Command:</div>
<div class="a" style="left:6px;top:474px;width:788px;height:21px;background:#f0f0f0"></div>
<div class="a" style="left:124.4px;top:476px;width:1px;height:18px;background:#d0d0d0"></div>
<div class="a" style="left:243.5px;top:476px;width:1px;height:18px;background:#d0d0d0"></div>
<div class="a" style="left:445px;top:476px;width:1px;height:18px;background:#d0d0d0"></div>
<div class="a" style="left:597.5px;top:476px;width:1px;height:18px;background:#d0d0d0"></div>
<div class="a" style="left:699.6px;top:476px;width:1px;height:18px;background:#d0d0d0"></div>
<div class="t" style="left:7.5px;top:477.2px;font-size:8.3px;color:#222;transform:scaleY(0.86);transform-origin:0 0">55.6638,36.4368</div>
<div class="t" style="left:9px;top:487.5px;font-size:6px;color:#444;">-</div>
<div class="t" style="left:127px;top:477.2px;font-size:8.3px;color:#222;transform:scaleY(0.86);transform-origin:0 0">66.529&lt;33.2083</div>
<div class="t" style="left:128px;top:487.5px;font-size:6px;color:#444;">-</div>
<div class="t" style="right:471.4px;top:478.5px;font-size:6.8px;color:#222">Select entity or region</div>
<div class="t" style="right:471.4px;top:485.5px;font-size:6.8px;color:#222">Move entity or reference</div>
<svg style="left:334px;top:475px" width="24" height="20"><defs><radialGradient id="mg" cx=".45" cy=".4" r=".6"><stop offset="0" stop-color="#fff"/><stop offset=".7" stop-color="#f4f4f4"/><stop offset="1" stop-color="#cfcfcf"/></radialGradient></defs><ellipse cx="11" cy="10" rx="9.6" ry="7.6" transform="rotate(32 11 10)" fill="url(#mg)" stroke="#8c8c8c" stroke-width=".7"/><path d="M3.5 8 C7 12 14 11 17.5 6.5" fill="none" stroke="#d8d8d8" stroke-width=".8"/><ellipse cx="9.8" cy="6.8" rx="1.7" ry="1.4" fill="#4a70e0"/><path d="M5.5 2.5 L7.5 1.8 L6.8 3.5Z" fill="#444"/></svg>
<div class="t" style="left:448.5px;top:478.5px;font-size:6.8px;color:#222;">Selected entities:</div>
<div class="t" style="left:448.5px;top:485.5px;font-size:6.8px;color:#222;">1 Line on Layer "construction".</div>
<div class="a" style="left:776px;top:490px;width:4.2px;height:7.5px;border:1px solid #ea80b0"></div>
<div class="a" style="left:781px;top:490px;width:4.2px;height:7.5px;border:1px solid #ea80b0"></div>
<div class="a" style="left:786px;top:490px;width:4.2px;height:7.5px;border:1px solid #ea80b0"></div>
<div class="a" style="left:791px;top:490px;width:4.2px;height:7.5px;border:1px solid #ea80b0"></div>
</body></html>
